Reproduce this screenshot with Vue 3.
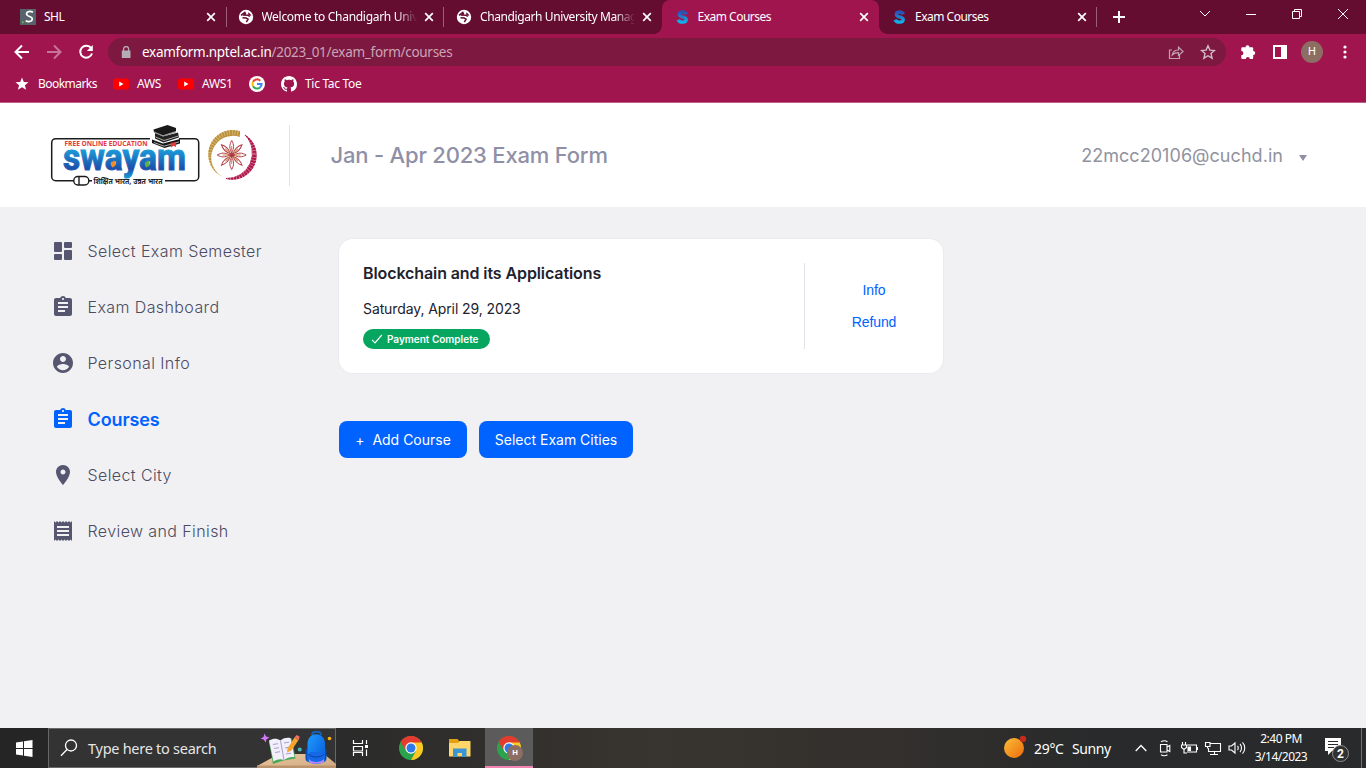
<script setup>
const tabs = [
  { title: 'SHL', icon: 'shl' },
  { title: 'Welcome to Chandigarh University', icon: 'globe' },
  { title: 'Chandigarh University Management', icon: 'globe' },
  { title: 'Exam Courses', icon: 's', active: true },
  { title: 'Exam Courses', icon: 's' },
]

const clipboard =
  'M19 3h-4.180C14.400 1.840 13.300 1 12 1s-2.400.840-2.820 2H5c-1.100 0-2 .900-2 2v14c0 1.100.900 2 2 2h14c1.100 0 2-.900 2-2V5c0-1.100-.900-2-2-2zm-7 0c.550 0 1 .450 1 1s-.450 1-1 1-1-.450-1-1 .450-1 1-1zm2 14H7v-2h7v2zm3-4H7v-2h10v2zm0-4H7V7h10v2z'

const menu = [
  {
    label: 'Select Exam Semester',
    path: 'M4 3H10a1 1 0 0 1 1 1v8a1 1 0 0 1-1 1H4a1 1 0 0 1-1-1V4a1 1 0 0 1 1-1zM14 3h6a1 1 0 0 1 1 1v4a1 1 0 0 1-1 1h-6a1 1 0 0 1-1-1V4a1 1 0 0 1 1-1zM4 15h6a1 1 0 0 1 1 1v4a1 1 0 0 1-1 1H4a1 1 0 0 1-1-1v-4a1 1 0 0 1 1-1zM14 11h6a1 1 0 0 1 1 1v8a1 1 0 0 1-1 1h-6a1 1 0 0 1-1-1v-8a1 1 0 0 1 1-1z',
  },
  { label: 'Exam Dashboard', path: clipboard },
  {
    label: 'Personal Info',
    path: 'M12 2C6.480 2 2 6.480 2 12s4.480 10 10 10 10-4.480 10-10S17.520 2 12 2zm0 3c1.660 0 3 1.340 3 3s-1.340 3-3 3-3-1.340-3-3 1.340-3 3-3zm0 14.200c-2.500 0-4.710-1.280-6-3.220.030-1.990 4-3.080 6-3.080 1.990 0 5.970 1.090 6 3.080-1.290 1.940-3.500 3.220-6 3.220z',
  },
  { label: 'Courses', path: clipboard, active: true },
  {
    label: 'Select City',
    path: 'M12 2C8.130 2 5 5.130 5 9c0 5.250 7 13 7 13s7-7.750 7-13c0-3.870-3.130-7-7-7zm0 9.500c-1.380 0-2.500-1.120-2.500-2.500s1.120-2.500 2.500-2.500 2.500 1.120 2.500 2.500-1.120 2.500-2.500 2.500z',
  },
  {
    label: 'Review and Finish',
    path: 'M18 17H6v-2h12v2zm0-4H6v-2h12v2zm0-4H6V7h12v2zM3 22l1.500-1.500L6 22l1.500-1.500L9 22l1.500-1.500L12 22l1.500-1.500L15 22l1.500-1.500L18 22l1.500-1.500L21 22V2l-1.500 1.500L18 2l-1.500 1.500L15 2l-1.500 1.500L12 2l-1.500 1.500L9 2 7.500 3.500 6 2 4.500 3.500 3 2v20z',
  },
]

const petals = [0, 45, 90, 135, 180, 225, 270, 315]
</script>

<template>
  <div class="screen">
    <div class="tabstrip">
      <div v-for="(t, i) in tabs" :key="i" class="tab" :class="{ active: t.active, divided: i !== 2 && i !== 3 }">
        <svg v-if="t.icon === 'shl'" class="fav" viewBox="0 0 16 16">
          <rect width="16" height="16" fill="#56636b" />
          <path d="M13 3.300C10.500 2 6.500 2 6.600 5c.100 3.100 6 1.800 5.700 5-.200 3-4.300 3-6.600 1.700" fill="none" stroke="#fff" stroke-width="1.700" />
          <rect x="2" y="12.500" width="1.600" height="1.600" fill="#6cc04a" />
        </svg>
        <svg v-else-if="t.icon === 'globe'" class="fav" viewBox="0 0 16 16">
          <circle cx="8" cy="8" r="7.200" fill="#fff" />
          <path d="M3 6.300L6.800 3.300l.6 1.200L6 6l4.300.300 1.500 1.200M4.500 8.800l3.700.200 1.900 1.200-1.800 3" fill="none" stroke="#670d31" stroke-width="1.500" />
          <path d="M10.500 3.300l2.900 2.900-1.200.500-2.200-1.400z" fill="#670d31" />
        </svg>
        <svg v-else class="fav" viewBox="0 0 16 16">
          <defs>
            <linearGradient id="sfav" x1="0" y1="0" x2="0" y2="1">
              <stop offset="0" stop-color="#2a50b4" />
              <stop offset="1" stop-color="#12b0e8" />
            </linearGradient>
          </defs>
          <path d="M12.300 5.300C11.300 2.300 5.500 2.200 5.300 5.300 5.200 8.600 12.400 7.200 12.200 10.700c-.200 3.400-6.900 3.200-8-.100" fill="none" stroke="url(#sfav)" stroke-width="3.400" />
        </svg>
        <span class="tabtitle" :class="{ fade: t.icon === 'globe' }">{{ t.title }}</span>
        <svg class="close" viewBox="0 0 10 10"><path d="M1.200 1.200l7.600 7.600M8.800 1.200L1.200 8.800" stroke="#fff" stroke-width="1.700" /></svg>
      </div>
      <svg class="plus" viewBox="0 0 12 12"><path d="M6 0v12M0 6h12" stroke="#fff" stroke-width="2" /></svg>
      <div class="winctl">
        <svg viewBox="0 0 46 28"><path d="M18 11l5 5 5-5" /></svg>
        <svg viewBox="0 0 46 28"><path d="M18 14.500h10" /></svg>
        <svg viewBox="0 0 46 28"><path d="M18.500 11.500h7v7h-7zM20.500 11.500v-2h7v7h-2" /></svg>
        <svg viewBox="0 0 46 28"><path d="M18 9l10 10M28 9L18 19" /></svg>
      </div>
    </div>

    <div class="toolbar">
      <svg class="nav" viewBox="0 0 16 16"><path d="M15 8H2M8 1.500L1.500 8 8 14.500" fill="none" stroke="#fff" stroke-width="2" /></svg>
      <svg class="nav" viewBox="0 0 16 16"><path d="M1 8h13M8 1.500L14.500 8 8 14.500" fill="none" stroke="#c8749a" stroke-width="2" /></svg>
      <svg class="nav" viewBox="0 0 16 16"><path d="M13.200 4.200A6 6 0 1 0 14 9.500" fill="none" stroke="#fff" stroke-width="2" /><path d="M14.800 1v6h-6z" fill="#fff" /></svg>
      <div class="omnibox">
        <svg class="lock" viewBox="0 0 10 12"><path d="M1 4.500h8.500V12H.800V4.500z" fill="#b5adb4" /><path d="M2.600 5V3a2.500 2.500 0 0 1 5 0v2" fill="none" stroke="#b5adb4" stroke-width="1.300" /></svg>
        <span class="url">examform.nptel.ac.in<span>/2023_01/exam_form/courses</span></span>
        <svg class="share" viewBox="0 0 16 16"><path d="M4 6H1.500v8.500h10V11M4.200 11c.700-3.500 3-5 6.300-5V3.200L15 7.400l-4.500 4V8.700c-3 0-4.800.800-6.300 2.300z" fill="none" stroke="#c3a1b2" stroke-width="1.200" /></svg>
        <svg class="star" viewBox="0 0 16 16"><path d="M8 1.800l1.900 4.300 4.600.400-3.500 3.100 1.100 4.600L8 11.700l-4.100 2.500L5 9.600 1.500 6.500l4.600-.400z" fill="none" stroke="#d3bcc8" stroke-width="1.400" /></svg>
      </div>
      <svg class="tool" viewBox="0 0 16 16"><path d="M5.500 3.200a2 2 0 0 1 4 0h2.700a1 1 0 0 1 1 1V7a2 2 0 0 1 0 4v3a1 1 0 0 1-1 1H9.800a2 2 0 0 0-4 0H2.300a1 1 0 0 1-1-1v-2.700a2 2 0 0 0 0-4.200V4.200a1 1 0 0 1 1-1z" fill="#fff" /></svg>
      <svg class="tool" viewBox="0 0 16 16"><path d="M1 1h14v14H1zM3 3v10h6V3z" fill="#fff" fill-rule="evenodd" /></svg>
      <span class="avatar">H</span>
      <svg class="dots" viewBox="0 0 4 14"><circle cx="2" cy="2" r="1.600" /><circle cx="2" cy="7" r="1.600" /><circle cx="2" cy="12" r="1.600" /></svg>
    </div>

    <div class="bookmarks">
      <svg class="bstar" viewBox="0 0 14 14"><path d="M7 .500l1.800 4.400 4.700.300-3.600 3 1.200 4.600L7 10.200l-4.100 2.600 1.200-4.600-3.600-3 4.700-.300z" fill="#fff" /></svg>
      <span class="bm bm1">Bookmarks</span>
      <svg class="yt" viewBox="0 0 16 12"><rect y=".500" width="16" height="11" rx="2.500" fill="#f00" /><path d="M6.200 3.500v5L10.500 6z" fill="#fff" /></svg>
      <span class="bm bm2">AWS</span>
      <svg class="yt" viewBox="0 0 16 12"><rect y=".500" width="16" height="11" rx="2.500" fill="#f00" /><path d="M6.200 3.500v5L10.500 6z" fill="#fff" /></svg>
      <span class="bm bm3">AWS1</span>
      <svg class="goog" viewBox="0 0 16 16">
        <circle cx="8" cy="8" r="8" fill="#fff" />
        <g fill="none" stroke-width="2">
          <path d="M11.300 4.700A4.600 4.600 0 0 0 4 5.800" stroke="#ea4335" />
          <path d="M4 5.800a4.600 4.600 0 0 0 0 4.400" stroke="#fbbc05" />
          <path d="M4 10.200a4.600 4.600 0 0 0 7 1.200" stroke="#34a853" />
          <path d="M11 11.400A4.500 4.500 0 0 0 12.600 8H8" stroke="#4285f4" />
        </g>
      </svg>
      <svg class="gh" viewBox="0 0 16 16"><path d="M8 0C3.580 0 0 3.580 0 8c0 3.540 2.290 6.530 5.470 7.590.400.070.550-.170.550-.380 0-.190-.010-.820-.010-1.490-2.010.370-2.530-.490-2.690-.940-.090-.230-.480-.940-.820-1.130-.280-.150-.680-.520-.010-.530.630-.010 1.080.580 1.230.820.720 1.210 1.870.870 2.330.660.070-.520.280-.870.510-1.070-1.780-.200-3.640-.890-3.640-3.950 0-.870.310-1.590.820-2.150-.080-.200-.360-1.020.080-2.120 0 0 .670-.210 2.200.820.640-.180 1.320-.270 2-.270s1.360.090 2 .270c1.530-1.040 2.200-.820 2.200-.820.440 1.100.160 1.920.080 2.120.510.560.820 1.270.820 2.150 0 3.070-1.870 3.750-3.650 3.950.290.250.540.730.540 1.480 0 1.070-.010 1.930-.010 2.200 0 .210.150.460.550.380A8.010 8.010 0 0 0 16 8c0-4.420-3.580-8-8-8z" fill="#fff" /></svg>
      <span class="bm bm4">Tic Tac Toe</span>
    </div>

    <header class="header">
      <svg class="logo" viewBox="48 122 212 68">
        <defs>
          <linearGradient id="sw" x1="0" y1="0" x2="0" y2="1">
            <stop offset=".3" stop-color="#1b9bd8" />
            <stop offset=".75" stop-color="#1c50ac" />
            <stop offset="1" stop-color="#16a5d8" />
          </linearGradient>
        </defs>
        <rect x="51.700" y="138.700" width="147" height="42" rx="4" fill="none" stroke="#1c1c1c" stroke-width="1.500" />
        <rect x="92" y="176" width="73" height="10" fill="#fff" />
        <rect x="150" y="132" width="29" height="12" fill="#fff" />
        <text x="64.500" y="146" class="free" textLength="83" lengthAdjust="spacingAndGlyphs">FREE ONLINE EDUCATION</text>
        <text x="63" y="170" class="swayam" textLength="123" lengthAdjust="spacingAndGlyphs">swayam</text>
        <path d="M112.500 167.500c-2.800-2.500-1.300-5.500 1.500-7 2.300 2.200 2.800 5.500-1.500 7z" fill="#f08a2c" />
        <path d="M146.500 167.500c-2.800-2.500-1.300-5.500 1.500-7 2.300 2.200 2.800 5.500-1.500 7z" fill="#5bb04a" />
        <path d="M153.500 129.500l14-4.500 8.500 3v4l-13 4.500-9-4z" fill="#191919" />
        <path d="M155 133l8 3.500 15-4 1 5-15.500 5-8.500-4z" fill="#222" />
        <path d="M152 139.500l11 4 17-4.500v4.500l-15.500 4.500-12.500-5z" fill="#161616" />
        <path d="M154 132l9 3.800 13-4.300M155.500 137l8.500 3.500 14.500-4.500M154 142.500l10 3.700 15-4.300" fill="none" stroke="#cfcfcf" stroke-width=".8" />
        <path d="M170.500 143l5.500-1v5l-2.500-1.300-2.500 1.700z" fill="#e23a3a" />
        <g fill="#fff" stroke="#1c1c1c" stroke-width="1.400">
          <rect x="73.800" y="176.500" width="15" height="8.500" rx="4" />
          <path d="M79 176.500v8.500" />
        </g>
        <text x="93.500" y="184.300" class="hindi" textLength="69" lengthAdjust="spacingAndGlyphs">शिक्षित भारत, उन्नत भारत</text>
        <path d="M240 131A24.600 24.600 0 0 0 224 177.500A21.800 21.800 0 0 1 240 137z" fill="#bd9138" />
        <path d="M245 135A24 24 0 0 1 226 178.500A25.500 25.500 0 0 0 245 135z" fill="#b0174a" stroke="#b0174a" />
        <circle cx="232" cy="154.500" r="22.700" fill="none" stroke="#fff" stroke-opacity=".55" stroke-width="6" stroke-dasharray=".600 2.200" />
        <g transform="translate(231.700 155)" fill="none" stroke="#b4404c" stroke-width="1">
          <g v-for="p in petals" :key="p" :transform="`rotate(${p})`">
            <path d="M0-2C-2.500-7-2.500-10 0-14.500 2.500-10 2.500-7 0-2z" />
            <path d="M0-3v-6" stroke="#c98c4a" />
          </g>
          <circle r="2" fill="#a93a3a" />
        </g>
      </svg>
      <h1 class="formtitle">Jan - Apr 2023 Exam Form</h1>
      <div class="user">22mcc20106@cuchd.in<i class="caret"></i></div>
    </header>

    <div class="body">
      <nav class="side">
        <div v-for="m in menu" :key="m.label" class="item" :class="{ on: m.active }">
          <svg viewBox="0 0 24 24"><path :d="m.path" fill="currentColor" /></svg>
          <span>{{ m.label }}</span>
        </div>
      </nav>
      <main class="main">
        <section class="card">
          <div class="course">
            <h2>Blockchain and its Applications</h2>
            <p>Saturday, April 29, 2023</p>
            <span class="badge">
              <svg viewBox="0 0 12 10"><path d="M1 5.800l3 3L10.800 1" fill="none" stroke="#fff" stroke-width="1.200" /></svg>
              <b>Payment Complete</b>
            </span>
          </div>
          <div class="links"><a>Info</a><a>Refund</a></div>
        </section>
        <div class="actions">
          <button class="add"><span>+</span>Add Course</button>
          <button class="cities">Select Exam Cities</button>
        </div>
      </main>
    </div>

    <footer class="taskbar">
      <div class="cell w48">
        <svg class="win" viewBox="0 0 17 17"><path d="M0 2.400l7-1V8H0zM8 1.200L16.500 0v8H8zM0 9h7v6.600l-7-1zM8 9h8.500v8L8 15.800z" fill="#fff" /></svg>
      </div>
      <div class="search">
        <svg class="mag" viewBox="0 0 18 18"><circle cx="11" cy="6.500" r="5.500" fill="none" stroke="#fff" stroke-width="1.300" /><path d="M7 10.500L1 16.800" stroke="#fff" stroke-width="1.300" /></svg>
        <span>Type here to search</span>
        <svg class="art" viewBox="257 728 79 40">
          <defs>
            <linearGradient id="desk" x1="0" y1="0" x2="1" y2="1"><stop offset="0" stop-color="#e9c9a2" /><stop offset="1" stop-color="#cfa77f" /></linearGradient>
            <linearGradient id="bag" x1="0" y1="0" x2="1" y2="1"><stop offset="0" stop-color="#1e9bff" /><stop offset="1" stop-color="#0759d8" /></linearGradient>
          </defs>
          <path d="M257 766l22-12h45l12 10v4h-79z" fill="url(#desk)" />
          <path d="M257 765.500h79v2.500h-79z" fill="#ba936d" />
          <path d="M264.500 733.500l1.500 3 3.500 1-3 1.700-1 3.300-1.700-3-3.300-.800 3-1.700z" fill="#d678ff" />
          <path d="M269 742l12-2 11-1.500 3.500 20-12 2-10.500 3.500z" fill="#48a957" />
          <path d="M269 740.500c5-2.500 8-2 11.500 0 3-2.500 6-3 10-2.500l4 19c-4 0-7 .500-10.500 3-4-1.500-7-.500-10.500 1.500z" fill="#f2effb" />
          <path d="M280.500 740.500l3.500 19.500M273 744.500l5-.800M274 748.500l5-.800M275 752.500l5-.800M284 743l5-.800M285 748l4-.800M286 754l5-.800" stroke="#a6a0c8" fill="none" />
          <path d="M287.500 748.500l7-11 4 2.500-7 10.500-4.500 2z" fill="#f6a52c" />
          <path d="M294.500 737.500l2-2.500 3 1.500-.500 3.500z" fill="#f46f68" />
          <circle cx="299.700" cy="749.500" r="2" fill="#46b9bc" />
          <circle cx="329.500" cy="738.500" r="1.800" fill="#ffb10a" />
          <path d="M312 735c0-4.500 9-4.500 9 0" fill="none" stroke="#1460ba" stroke-width="2" />
          <rect x="305.500" y="748" width="21" height="14" rx="4" fill="#0b4bb8" />
          <path d="M307.500 744c0-13 17.500-13 17.500 0v16c0 5-17.500 5-17.500 0z" fill="url(#bag)" />
          <rect x="308" y="752" width="16.500" height="11" rx="4" fill="#1569e8" />
          <path d="M308.500 754c2 4 13 4 15.500 0" fill="none" stroke="#09429e" />
          <path d="M309 759c2 4 12 4 15 0v3c-2 2-13 2-15 0z" fill="#b785ff" />
        </svg>
      </div>
      <div class="cell w50">
        <svg class="tv" viewBox="0 0 18 18"><path d="M1.500 1v3.500h9V1M1.500 17v-3.500h9V17M1.500 7.500h9v4.500h-9zM14.500 1v4M14.500 10.500V17" fill="none" stroke="#fff" stroke-width="1.200" /><rect x="13" y="6" width="3" height="3" fill="#fff" /></svg>
      </div>
      <div v-for="k in ['chrome', 'files', 'profile']" :key="k" class="cell" :class="k">
        <svg v-if="k === 'files'" class="folder" viewBox="0 0 22 20">
          <path d="M0 1h8.500l1.500 2h11v4H0z" fill="#e3a112" />
          <path d="M0 5h9l2-2h10.500v15.500H0z" fill="#ffd667" />
          <path d="M4 10.500h13.500V19H13v-4H8.500v4H4z" fill="#3a94d6" />
        </svg>
        <svg v-else class="cr" viewBox="0 0 24 24">
          <circle cx="12" cy="12" r="12" fill="#2ba24c" />
          <path d="M12 12L1.600 6A12 12 0 0 1 22.400 6z" fill="#e33b2e" />
          <path d="M1.600 6A12 12 0 0 1 22.400 6.500H12L7 15z" fill="#e33b2e" />
          <path d="M12 6.500h10.700A12 12 0 0 1 12 24l5-9z" fill="#fcc921" />
          <circle cx="12" cy="12" r="5.700" fill="#fff" />
          <circle cx="12" cy="12" r="4.500" fill="#3079e8" />
        </svg>
        <span v-if="k === 'profile'" class="mini">H</span>
      </div>
      <div class="tray">
        <svg class="sun" viewBox="0 0 24 24">
          <defs><linearGradient id="sun" x1="0" y1="0" x2="1" y2="1"><stop offset="0" stop-color="#f9c038" /><stop offset="1" stop-color="#ee6a0c" /></linearGradient></defs>
          <circle cx="10" cy="13" r="10" fill="url(#sun)" /><circle cx="19" cy="4" r="3.200" fill="#c42b1c" />
        </svg>
        <span class="temp">29°C</span><span class="sunny">Sunny</span>
        <svg class="chev" viewBox="0 0 12 8"><path d="M.700 7L6 1.500 11.300 7" fill="none" stroke="#fff" stroke-width="1.300" /></svg>
        <svg class="ti" viewBox="0 0 18 18"><path d="M4.500 5.500h6.500v7.500H4.500zM11 8l2.800-1.500v6L11 11M5 2.800c2-1.300 4.500-1.300 6.500 0M5 15.700c2 1.300 4.500 1.300 6.500 0" /></svg>
        <svg class="ti" viewBox="0 0 18 18"><path d="M6 6h10.500v7H7M17.500 8v3M2.500 3v3M5.500 3v3M1.500 6h5v2.500L4 10.500 1.500 8.500zM4 10.500V14h3" /><path d="M8 8h2.500v3.500H8z" fill="#fff" /></svg>
        <svg class="ti" viewBox="0 0 18 18"><path d="M6 4.500h10.500v8H4.500V9M10.500 12.500v3M6 15.500h8M1.500 3.500h4.500v4H1.500zM3.500 7.500v2" /></svg>
        <svg class="ti" viewBox="0 0 18 18"><path d="M1 7v4h2.500L7 14V4L3.500 7zM9.500 7c1 1 1 3 0 4M12 5c2 2 2 6 0 8M14.500 3.300c3 3 3 8.400 0 11.400" /></svg>
        <div class="clock"><span class="time">2:40 PM</span><span class="date">3/14/2023</span></div>
        <svg class="note" viewBox="0 0 26 26">
          <path d="M1 1h16v13H8l-4 4v-4H1z" fill="#fff" /><path d="M4 4.500h10M4 7.500h10M4 10.500h6" stroke="#2b2b2b" />
          <circle cx="16.500" cy="16.500" r="8" fill="#313131" stroke="#8f8f8f" />
          <text x="16.500" y="20.500" text-anchor="middle">2</text>
        </svg>
        <i class="edge"></i>
      </div>
    </footer>
  </div>
</template>

<style>
body { margin: 0; overflow: hidden; }
</style>

<style scoped>
* { box-sizing: border-box; }
svg { display: block; flex: none; }
.screen { width: 1366px; height: 768px; display: flex; flex-direction: column; background: #f1f1f4; font-family: "Noto Sans", sans-serif; overflow: hidden; }
.tabstrip { height: 34px; background: #640d31; display: flex; align-items: center; padding-left: 9px; }
.tab { width: 217.500px; height: 34px; display: flex; align-items: center; padding-left: 11px; position: relative; }
.tab.divided::after { content: ""; position: absolute; right: 0; top: 7px; width: 1px; height: 20px; background: #9c5f79; }
.tab:nth-child(n + 3) { padding-left: 12px; }
.tab:nth-child(n + 3) .close { margin-left: 6.500px; }
.tab.active { background: #a0154e; border-radius: 8px 8px 0 0; }
.tab.active::before, .tab.active::after { content: ""; position: absolute; bottom: 0; width: 8px; height: 8px; }
.tab.active::before { left: -8px; background: radial-gradient(circle at 0 0, transparent 7.500px, #a0154e 8px); }
.tab.active::after { right: -8px; background: radial-gradient(circle at 100% 0, transparent 7.500px, #a0154e 8px); }
.fav { width: 16px; height: 16px; }
.tabtitle { width: 155px; margin-left: 8px; font-size: 12px; line-height: 16px; letter-spacing: -.5px; color: #fff; white-space: nowrap; overflow: hidden; }
.fade { letter-spacing: -.3px; -webkit-mask-image: linear-gradient(90deg, #000 135px, transparent 155px); mask-image: linear-gradient(90deg, #000 135px, transparent 155px); }
.close { width: 10px; height: 10px; margin-left: 7px; }
.tab:nth-child(3) .fade { letter-spacing: -.4px; }
.plus { width: 12px; height: 12px; margin-left: 16px; }
.winctl { margin-left: auto; display: flex; height: 28px; align-self: flex-start; }
.winctl svg { width: 46px; height: 28px; fill: none; stroke: #fff; stroke-width: 1; }
.toolbar { height: 36px; background: #a0154e; display: flex; align-items: center; padding-left: 14px; }
.nav { width: 16px; height: 16px; margin-right: 16px; }
.omnibox { width: 1118px; height: 28px; border-radius: 14px; background: #7d1841; margin-left: -2px; display: flex; align-items: center; padding: 0 10px 0 13px; }
.lock { width: 10px; height: 12px; }
.url { margin-left: 11px; font-size: 13.500px; line-height: 20px; letter-spacing: -.280px; color: #fff; white-space: nowrap; flex: 1; }
.url span { color: #cba5b6; }
.share { width: 16px; height: 16px; margin-right: 16px; }
.star { width: 16px; height: 16px; }
.tool { width: 16px; height: 16px; margin-left: 14px; }
.tool + .tool { margin-left: 16px; }
.avatar { width: 22px; height: 22px; border-radius: 50%; background: #8d6e63; color: #fff; font: 11px/22px Roboto, sans-serif; text-align: center; margin-left: 13px; }
.dots { width: 4px; height: 14px; margin-left: 19.500px; fill: #fff; }
.bookmarks { height: 33px; background: #a0154e; border-bottom: 1px solid #bd5d86; display: flex; align-items: center; padding: 0 0 4px 15px; color: #fff; font-size: 12px; letter-spacing: -.300px; white-space: nowrap; }
.bstar { width: 14px; height: 14px; }
.bm { line-height: 16px; }
.bm1 { width: 76px; padding-left: 9px; letter-spacing: -.550px; }
.yt { width: 16px; height: 12px; margin-left: 8px; }
.bm2 { width: 41px; padding-left: 8px; }
.bm3 { width: 55px; padding-left: 8px; }
.goog { width: 16px; height: 16px; }
.gh { width: 16px; height: 16px; margin-left: 16px; }
.bm4 { padding-left: 8px; }
.header { height: 104px; background: #fff; display: flex; align-items: center; padding: 0 59px 0 48px; font-family: Inter, sans-serif; color: #92929d; }
.logo { width: 212px; height: 68px; margin-top: 2px; }
.free { font: 700 6.500px "Open Sans", sans-serif; fill: #e5383b; }
.swayam { font: 700 36px Roboto, sans-serif; fill: url(#sw); stroke: url(#sw); stroke-width: 1px; }
.hindi { font: 700 8px "Noto Sans", "Noto Sans Devanagari", sans-serif; fill: #222; }
.formtitle { margin: 0 0 0 29px; height: 61px; border-left: 1px solid #e2e2ea; padding-left: 40.500px; font-size: 22px; line-height: 60px; font-weight: 500; letter-spacing: -.200px; color: #8f8fa6; white-space: nowrap; }
.user { margin-left: auto; display: flex; align-items: center; font-size: 18px; letter-spacing: .050px; color: #92929f; }
.caret { border: 4px solid transparent; border-top: 6px solid #8f8fa6; border-bottom: 0; margin: 5px 0 0 16px; }
.body { height: 521px; display: flex; font-family: Inter, sans-serif; }
.side { width: 339px; padding: 16px 0 0 51px; }
.item { height: 56px; display: flex; align-items: center; gap: 12.500px; font-size: 16px; font-weight: 300; letter-spacing: .400px; color: #4b4b62; white-space: nowrap; }
.item svg { width: 24px; height: 24px; color: #565670; }
.item.on, .item.on svg { color: #0062ff; }
.item.on { font-size: 18px; font-weight: 600; letter-spacing: -.100px; }
.main { padding-top: 32px; }
.card { width: 604px; height: 134px; background: #fff; border-radius: 14px; box-shadow: 0 0 0 1px #ebebef; padding: 24px 0 24px 24px; display: flex; }
.course { width: 441px; }
h2 { margin: 0; font-size: 16px; line-height: 20px; font-weight: 600; letter-spacing: -.1px; color: #22222e; }
p { margin: 17px 0 11px; font-size: 14px; line-height: 18px; letter-spacing: -.100px; color: #22222e; }
.badge { width: 127px; height: 20px; border-radius: 10px; background: #06a660; display: flex; align-items: center; padding-left: 8px; color: #fff; font-size: 10px; white-space: nowrap; }
.badge svg { width: 12px; height: 10px; margin-right: 4px; }
.badge b { font-weight: 600; }
.links { width: 139px; border-left: 1px solid #e2e2ea; display: flex; flex-direction: column; align-items: center; justify-content: center; gap: 12px; font: 14px/20px "Liberation Sans", sans-serif; letter-spacing: -.100px; color: #0062ff; }
.actions { display: flex; gap: 12px; margin-top: 48px; }
button { height: 37px; border: 0; border-radius: 8px; background: #0062ff; color: #fff; font: 400 14px/20px Inter, sans-serif; padding: 0; white-space: nowrap; }
.add { width: 128px; }
.add span { margin-right: 8px; }
.cities { width: 154px; }
.taskbar { height: 40px; background: linear-gradient(90deg, #252526 0, #2b2b2b 25%, #38342f 48%, #33302d 65%, #292a2b 80%); display: flex; color: #fff; }
.cell { width: 48px; height: 40px; display: flex; align-items: center; justify-content: center; position: relative; }
.win { width: 17px; height: 17px; }
.search { width: 288px; height: 40px; background: #333; border: 1px solid #686868; display: flex; align-items: center; padding-left: 11px; font-size: 14.500px; color: #e5e5e5; position: relative; white-space: nowrap; letter-spacing: -.270px; }
.mag { width: 18px; height: 18px; margin-right: 10px; }
.art { width: 79px; height: 40px; position: absolute; right: -1px; top: -1px; }
.w50 { width: 51px; padding-right: 1px; }
.tv { width: 18px; height: 18px; }
.cr { width: 24px; height: 24px; }
.files { width: 50px; }
.profile { background: #5b5b5b; border-bottom: 2px solid #f285b3; padding-top: 2px; }
.mini { position: absolute; left: 22px; top: 17px; width: 16px; height: 16px; border-radius: 50%; background: #8d6e63; font: 700 8px/16px Roboto, sans-serif; text-align: center; }
.folder { width: 22px; height: 20px; }
.tray { margin-left: auto; display: flex; align-items: center; font-size: 14px; white-space: nowrap; }
.sun { width: 24px; height: 24px; margin-top: -3px; }
.temp { width: 38px; margin-left: 6px; letter-spacing: -.3px; }
.sunny { width: 63px; letter-spacing: -.4px; }
.chev { width: 12px; height: 8px; margin-right: 9px; }
.ti { width: 18px; height: 18px; margin-right: 6px; fill: none; stroke: #fff; stroke-width: 1.100; }
.clock { width: 64px; padding-right: 6px; display: flex; flex-direction: column; align-items: center; font-size: 12px; line-height: 18px; letter-spacing: -.500px; }
.note { width: 26px; height: 26px; margin: 4px 0 0 8px; }
.note text { font: 700 12px Roboto, sans-serif; fill: #fff; }
.edge { width: 1px; height: 40px; background: #717171; margin: 0 4px 0 11px; }
</style>
